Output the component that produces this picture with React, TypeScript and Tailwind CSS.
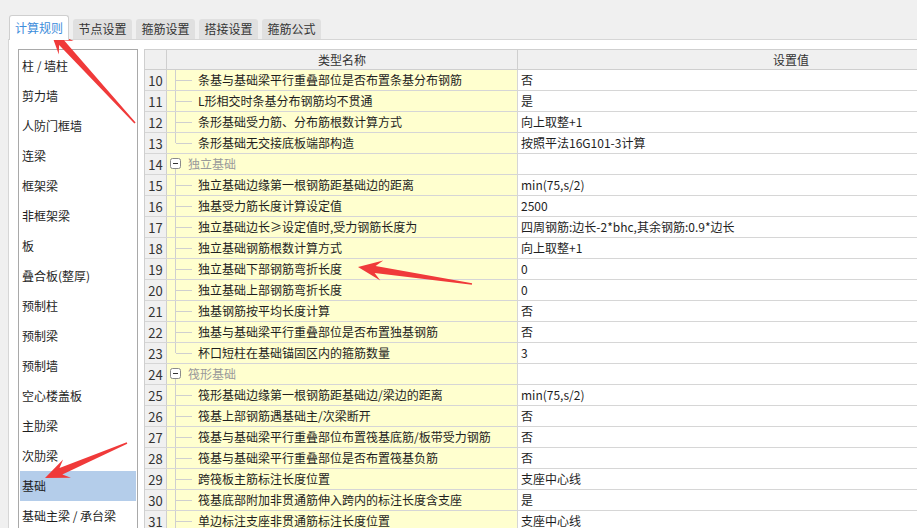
import React from 'react';

const tabs = ['计算规则', '节点设置', '箍筋设置', '搭接设置', '箍筋公式'];

const menu = [
  '柱 / 墙柱', '剪力墙', '人防门框墙', '连梁', '框架梁', '非框架梁', '板', '叠合板(整厚)',
  '预制柱', '预制梁', '预制墙', '空心楼盖板', '主肋梁', '次肋梁', '基础', '基础主梁 / 承台梁',
];

type Row = { no: number; name: string; value?: string; group?: boolean; last?: boolean };

const rows: Row[] = [
  { no: 10, name: '条基与基础梁平行重叠部位是否布置条基分布钢筋', value: '否' },
  { no: 11, name: 'L形相交时条基分布钢筋均不贯通', value: '是' },
  { no: 12, name: '条形基础受力筋、分布筋根数计算方式', value: '向上取整+1' },
  { no: 13, name: '条形基础无交接底板端部构造', value: '按照平法16G101-3计算', last: true },
  { no: 14, name: '独立基础', group: true },
  { no: 15, name: '独立基础边缘第一根钢筋距基础边的距离', value: 'min(75,s/2)' },
  { no: 16, name: '独基受力筋长度计算设定值', value: '2500' },
  { no: 17, name: '独立基础边长≥设定值时,受力钢筋长度为', value: '四周钢筋:边长-2*bhc,其余钢筋:0.9*边长' },
  { no: 18, name: '独立基础钢筋根数计算方式', value: '向上取整+1' },
  { no: 19, name: '独立基础下部钢筋弯折长度', value: '0' },
  { no: 20, name: '独立基础上部钢筋弯折长度', value: '0' },
  { no: 21, name: '独基钢筋按平均长度计算', value: '否' },
  { no: 22, name: '独基与基础梁平行重叠部位是否布置独基钢筋', value: '否' },
  { no: 23, name: '杯口短柱在基础锚固区内的箍筋数量', value: '3', last: true },
  { no: 24, name: '筏形基础', group: true },
  { no: 25, name: '筏形基础边缘第一根钢筋距基础边/梁边的距离', value: 'min(75,s/2)' },
  { no: 26, name: '筏基上部钢筋遇基础主/次梁断开', value: '否' },
  { no: 27, name: '筏基与基础梁平行重叠部位布置筏基底筋/板带受力钢筋', value: '否' },
  { no: 28, name: '筏基与基础梁平行重叠部位是否布置筏基负筋', value: '否' },
  { no: 29, name: '跨筏板主筋标注长度位置', value: '支座中心线' },
  { no: 30, name: '筏基底部附加非贯通筋伸入跨内的标注长度含支座', value: '是' },
  { no: 31, name: '单边标注支座非贯通筋标注长度位置', value: '支座中心线' },
];

// red annotation arrow, tail -> tip
function arrowPoints(x1: number, y1: number, x2: number, y2: number) {
  const dx = x2 - x1;
  const dy = y2 - y1;
  const len = Math.hypot(dx, dy);
  const ux = dx / len;
  const uy = dy / len;
  const nx = -uy;
  const ny = ux;
  const hl = 24;
  const wh = 20;
  const wn = 7;
  const wt = 1.5;
  const neck = (d: number, w: number) => [x2 - ux * d + nx * w, y2 - uy * d + ny * w];
  const pts = [
    [x1 + nx * wt / 2, y1 + ny * wt / 2],
    neck(hl * 0.72, wn / 2),
    neck(hl, wh / 2),
    [x2, y2],
    neck(hl, -wh / 2),
    neck(hl * 0.72, -wn / 2),
    [x1 - nx * wt / 2, y1 - ny * wt / 2],
  ];
  return pts.map((p) => `${p[0].toFixed(1)},${p[1].toFixed(1)}`).join(' ');
}

const TreeLink = ({ last }: { last?: boolean }) => (
  <svg width="31" height="20" className="shrink-0">
    <line x1="8.5" y1="0" x2="8.5" y2={last ? 10 : 20} stroke="#cfcfcf" />
    <line x1="9" y1="10.5" x2="25" y2="10.5" stroke="#cfcfcf" />
  </svg>
);

const GroupBox = () => (
  <svg width="21" height="20" className="shrink-0">
    <rect x="3.5" y="4.5" width="10" height="10" rx="2" fill="white" stroke="#8a8a8a" />
    <line x1="6" y1="9.5" x2="11" y2="9.5" stroke="#333" />
    <line x1="8.5" y1="15" x2="8.5" y2="20" stroke="#cfcfcf" />
  </svg>
);

export default function App() {
  return (
    <div
      className="relative w-[917px] h-[528px] overflow-hidden bg-[#f0f0f0] text-[12px] text-[#1e1e1e]"
      style={{ fontFamily: '"Noto Sans CJK SC", "Noto Sans", sans-serif' }}
    >
      {/* tabs */}
      <div className="h-[39px] flex items-end pl-[9px] gap-[4px]">
        {tabs.map((t, i) =>
          i === 0 ? (
            <div
              key={t}
              className="relative z-10 -mb-px h-[25px] w-[60px] bg-white border border-b-0 border-[#cfcfcf] rounded-t-[3px] flex items-center justify-center text-[#3d8ddb]"
            >
              {t}
            </div>
          ) : (
            <div
              key={t}
              className="h-[20px] w-[59px] bg-[#e0e0e0] rounded-t-[3px] flex items-center justify-center text-[#333]"
            >
              {t}
            </div>
          )
        )}
      </div>

      {/* panel */}
      <div className="ml-[8px] h-[489px] bg-white border-t border-l border-[#d6d6d6] flex pt-[9px] pl-[9px] gap-[6px]">
        {/* left list */}
        <div className="w-[120px] h-[520px] shrink-0 border border-[#a9a9a9] px-px pt-[1px]">
          {menu.map((m, i) => (
            <div
              key={m}
              className={`h-[30px] flex items-center pl-[2px] leading-none ${i === 14 ? 'bg-[#b4cdea]' : ''}`}
            >
              {m}
            </div>
          ))}
        </div>

        {/* grid */}
        <div className="w-[920px] shrink-0 border-t border-l border-[#cfcfcf] leading-none">
          <div className="flex h-[20px] bg-[#f0f0f0] border-b border-[#cfcfcf] text-[#333]">
            <div className="w-[22px] shrink-0 border-r border-[#cfcfcf]" />
            <div className="w-[351px] shrink-0 border-r border-[#cfcfcf] flex items-center justify-center">类型名称</div>
            <div className="w-[546px] shrink-0 flex items-center justify-center">设置值</div>
          </div>
          {rows.map((r) => (
            <div key={r.no} className="flex h-[21px] border-b border-[#d6d6d6]">
              <div className="w-[22px] shrink-0 bg-[#f0f0f0] border-r border-[#cfcfcf] flex items-center justify-center text-[13px] text-[#333]">
                {r.no}
              </div>
              <div className="w-[351px] shrink-0 bg-[#ffffcf] border-r border-[#d6d6d6] flex items-center whitespace-nowrap">
                {r.group ? (
                  <>
                    <GroupBox />
                    <span className="text-[#9a9a9a]">{r.name}</span>
                  </>
                ) : (
                  <>
                    <TreeLink last={r.last} />
                    <span>{r.name}</span>
                  </>
                )}
              </div>
              <div className="w-[546px] shrink-0 flex items-center pl-[3px] whitespace-nowrap">{r.value}</div>
            </div>
          ))}
        </div>
      </div>

      {/* annotation arrows */}
      <svg className="absolute inset-0 pointer-events-none" width="917" height="528">
        <polygon points={arrowPoints(135, 123, 50, 30)} fill="#f03a3a" />
        <polygon points={arrowPoints(472, 284, 358, 267)} fill="#f03a3a" />
        <polygon points={arrowPoints(127, 443, 45, 478)} fill="#f03a3a" />
      </svg>
    </div>
  );
}
